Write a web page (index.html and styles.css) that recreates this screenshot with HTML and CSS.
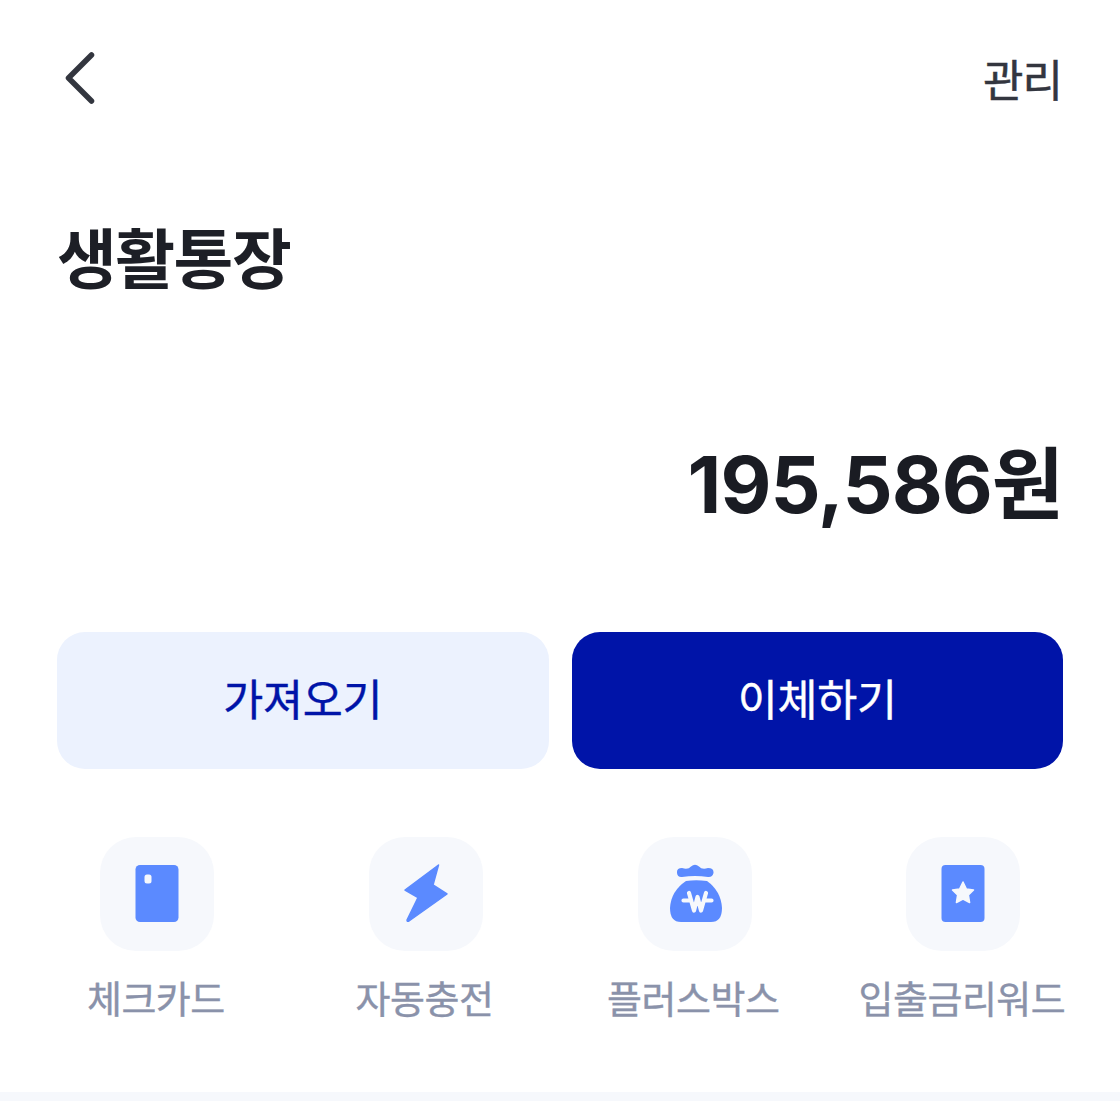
FILE: index.html
```html
<!DOCTYPE html>
<html lang="ko">
<head>
<meta charset="utf-8">
<title>생활통장</title>
<link rel="stylesheet" href="styles.css">
</head>
<body>
<main class="page">
  <header class="topbar">
    <svg class="back" width="32" height="56" viewBox="0 0 32 56"><path d="M27.500 5 L4.500 28 L27.500 51" fill="none" stroke="#33363f" stroke-width="5.500" stroke-linecap="round" stroke-linejoin="round"/></svg>
    <span class="manage">관리</span>
  </header>
  <h1 class="title">생활통장</h1>
  <p class="amount">195,586원</p>
  <div class="actions">
    <button class="btn btn-light">가져오기</button>
    <button class="btn btn-primary">이체하기</button>
  </div>
  <nav class="menu">
    <div class="item">
      <div class="tile"><svg width="48" height="60" viewBox="0 0 48 60"><rect x="2.500" y="1" width="43" height="57" rx="4.500" fill="#5b8aff"/><rect x="11.500" y="10.500" width="7" height="9" rx="2.500" fill="#f6f8fc"/></svg></div>
      <span class="label">체크카드</span>
    </div>
    <div class="item">
      <div class="tile"><svg width="48" height="60" viewBox="0 0 48 60"><path d="M36.500 1 L3 26 L16 33.500 L5 56 Q5 58 7 57 L45 30 L31 21 Z" fill="#5b8aff" stroke="#5b8aff" stroke-width="1.500" stroke-linejoin="round"/></svg></div>
      <span class="label">자동충전</span>
    </div>
    <div class="item">
      <div class="tile"><svg width="56" height="60" viewBox="0 0 56 60"><path d="M15 4 Q21 6 24 2.500 Q28 -1 32 2.500 Q35 6 41 4 Q47 4 46.500 9 Q45.500 13.500 41 13 Q28 11 15 13 Q10.500 13.500 10 9 Q9.500 4 15 4 Z" fill="#5b8aff"/><path d="M19 17 Q29 15.500 40 17 Q54 27 55 44 Q55 58 44 58 L14 58 Q3 58 3 44 Q4 27 19 17 Z" fill="#5b8aff"/><path d="M22 29 L27 46.500 L30.500 33 L34 46.500 L39 29 M16.500 36.500 L22 36.500 M39 36.500 L44.500 36.500" fill="none" stroke="#f6f8fc" stroke-width="4.200" stroke-linecap="round" stroke-linejoin="round"/></svg></div>
      <span class="label">플러스박스</span>
    </div>
    <div class="item">
      <div class="tile"><svg width="48" height="60" viewBox="0 0 48 60"><rect x="2.500" y="1" width="43" height="57" rx="4" fill="#5b8aff"/><path d="M24 18 L27.400 25 L34.500 26 L29.400 31 L30.600 38.500 L24 35 L17.400 38.500 L18.600 31 L13.500 26 L20.600 25 Z" fill="#f6f8fc" stroke="#f6f8fc" stroke-width="1.500" stroke-linejoin="round"/></svg></div>
      <span class="label">입출금리워드</span>
    </div>
  </nav>
  <div class="divider"></div>
</main>
</body>
</html>
```

FILE: styles.css
```css
* { box-sizing: border-box; }
html, body { margin: 0; padding: 0; background: #fff; }
body { font-family: "Noto Sans CJK KR", "Noto Sans", sans-serif; }
.page { width: 1120px; height: 1101px; display: flex; flex-direction: column; overflow: hidden; }
.topbar { display: flex; justify-content: space-between; align-items: center; height: 56px; margin-top: 50px; padding: 0 58px 0 64px; }
.back { display: block; }
.manage { font-size: 44px; line-height: 56px; font-weight: 400; -webkit-text-stroke: 0.500px #33363f; letter-spacing: -1px; color: #33363f; }
.title { margin: 106px 0 0 57px; font-size: 65px; line-height: 86px; font-weight: 700; letter-spacing: -1.500px; color: #1d1f26; }
.amount { margin: 142px 57px 0 0; text-align: right; font-family: Inter, "Noto Sans CJK KR", sans-serif; font-size: 78.500px; line-height: 90px; font-weight: 700; letter-spacing: -1px; color: #1a1c23; }
.actions { display: flex; gap: 23px; margin-top: 102px; padding: 0 57px; }
.btn { flex: 1; height: 137px; padding: 0 0 6px; border: 0; border-radius: 28px; font-family: inherit; font-size: 43.500px; font-weight: 400; -webkit-text-stroke: 0.400px currentColor; letter-spacing: -0.300px; }
.btn-light { background: #ecf2fe; color: #0014a8; }
.btn-primary { background: #0014a8; color: #fff; }
.menu { display: grid; grid-template-columns: repeat(4, 268.700px); margin-top: 68px; padding-left: 23px; }
.item { display: flex; flex-direction: column; align-items: center; }
.tile { width: 114px; height: 114px; border-radius: 36px; background: #f6f8fc; display: flex; align-items: center; justify-content: center; }
.label { margin: 19px 3px 0 0; font-size: 38px; line-height: 54px; font-weight: 400; -webkit-text-stroke: 0.400px #8a92aa; letter-spacing: -0.500px; white-space: nowrap; color: #8a92aa; }
.divider { margin-top: auto; height: 9px; background: #f6f8fc; }
```
